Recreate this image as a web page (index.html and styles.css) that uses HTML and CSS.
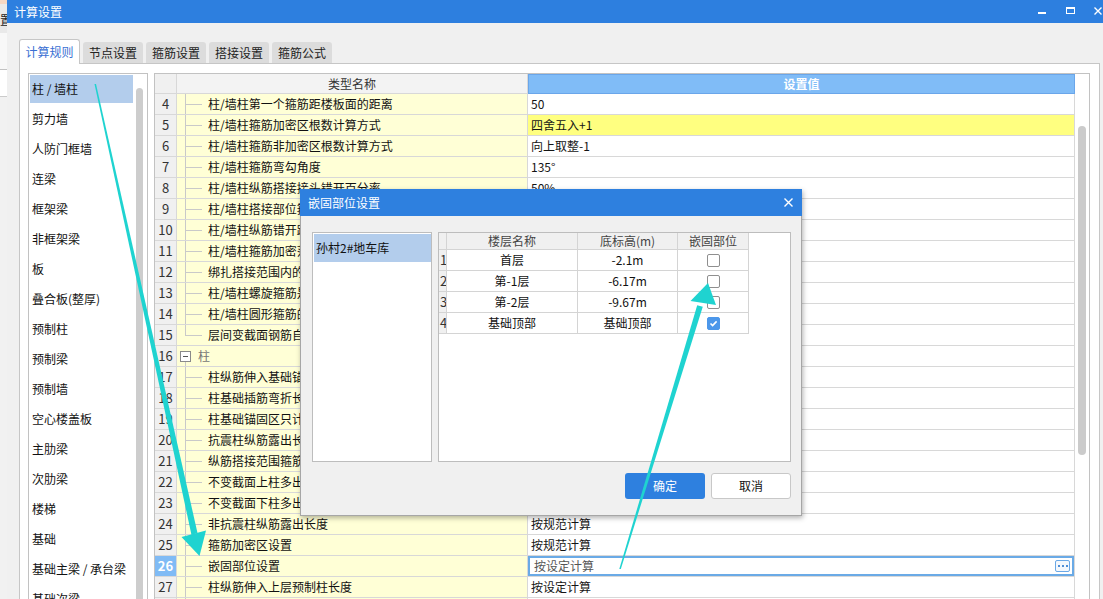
FILE: index.html
```html
<!DOCTYPE html>
<html lang="zh-CN">
<head>
<meta charset="utf-8">
<title>计算设置</title>
<link rel="stylesheet" href="styles.css">
</head>
<body>
<div class="desk">
  <div class="behind">
    <div class="b1"></div>
    <div class="b2"><span class="frag">设置</span></div>
    <div class="b3"></div>
    <div class="b4"></div>
    <div class="b5"></div>
  </div>
  <div class="win">
    <div class="titlebar">
      <span class="ttl">计算设置</span>
      <svg class="ctrls" width="69" height="23" viewBox="0 0 69 23">
        <rect x="4" y="12" width="8" height="2" fill="#fff"/>
        <rect x="32.5" y="7.5" width="8" height="6" fill="none" stroke="#fff"/>
        <rect x="32" y="7" width="9" height="2" fill="#fff"/>
        <path d="M60.5 7.5 L67.5 14.5 M67.5 7.5 L60.5 14.5" stroke="#fff" stroke-width="1.4"/>
      </svg>
    </div>
    <div class="winbody">
      <div class="tabs">
        <div class="tab active">计算规则</div>
        <div class="tab">节点设置</div>
        <div class="tab">箍筋设置</div>
        <div class="tab">搭接设置</div>
        <div class="tab">箍筋公式</div>
      </div>
      <div class="panel">
        <div class="cats">
          <div class="catlist">
            <div class="cat sel">柱 / 墙柱</div>
            <div class="cat">剪力墙</div>
            <div class="cat">人防门框墙</div>
            <div class="cat">连梁</div>
            <div class="cat">框架梁</div>
            <div class="cat">非框架梁</div>
            <div class="cat">板</div>
            <div class="cat">叠合板(整厚)</div>
            <div class="cat">预制柱</div>
            <div class="cat">预制梁</div>
            <div class="cat">预制墙</div>
            <div class="cat">空心楼盖板</div>
            <div class="cat">主肋梁</div>
            <div class="cat">次肋梁</div>
            <div class="cat">楼梯</div>
            <div class="cat">基础</div>
            <div class="cat">基础主梁 / 承台梁</div>
            <div class="cat">基础次梁</div>
          </div>
          <div class="catscroll"><div class="cthumb"></div></div>
        </div>
        <div class="table">
          <div class="tgrid">
            <div class="tr head"><div class="num"></div><div class="name">类型名称</div><div class="val">设置值</div></div>
            <div class="tr"><div class="num">4</div><div class="name"><span class="tree"></span><span class="nt">柱/墙柱第一个箍筋距楼板面的距离</span></div><div class="val">50</div></div>
            <div class="tr"><div class="num">5</div><div class="name"><span class="tree"></span><span class="nt">柱/墙柱箍筋加密区根数计算方式</span></div><div class="val hl">四舍五入+1</div></div>
            <div class="tr"><div class="num">6</div><div class="name"><span class="tree"></span><span class="nt">柱/墙柱箍筋非加密区根数计算方式</span></div><div class="val">向上取整-1</div></div>
            <div class="tr"><div class="num">7</div><div class="name"><span class="tree"></span><span class="nt">柱/墙柱箍筋弯勾角度</span></div><div class="val">135°</div></div>
            <div class="tr"><div class="num">8</div><div class="name"><span class="tree"></span><span class="nt">柱/墙柱纵筋搭接接头错开百分率</span></div><div class="val">50%</div></div>
            <div class="tr"><div class="num">9</div><div class="name"><span class="tree"></span><span class="nt">柱/墙柱搭接部位箍筋加密</span></div><div class="val">是</div></div>
            <div class="tr"><div class="num">10</div><div class="name"><span class="tree"></span><span class="nt">柱/墙柱纵筋错开距离设置</span></div><div class="val">按规范计算</div></div>
            <div class="tr"><div class="num">11</div><div class="name"><span class="tree"></span><span class="nt">柱/墙柱箍筋加密范围包含错开距离</span></div><div class="val">是</div></div>
            <div class="tr"><div class="num">12</div><div class="name"><span class="tree"></span><span class="nt">绑扎搭接范围内的箍筋间距min(5d,100)中，纵筋d的取值</span></div><div class="val">上下层最小直径</div></div>
            <div class="tr"><div class="num">13</div><div class="name"><span class="tree"></span><span class="nt">柱/墙柱螺旋箍筋是否连续通过</span></div><div class="val">是</div></div>
            <div class="tr"><div class="num">14</div><div class="name"><span class="tree"></span><span class="nt">柱/墙柱圆形箍筋的搭接长度</span></div><div class="val">max(lae,300)</div></div>
            <div class="tr"><div class="num">15</div><div class="name"><span class="tree last"></span><span class="nt">层间变截面钢筋自动判断</span></div><div class="val">是</div></div>
            <div class="tr"><div class="num">16</div><div class="name grp"><span class="box"><span class="minus"></span></span><span class="gt">柱</span></div><div class="val"></div></div>
            <div class="tr"><div class="num">17</div><div class="name"><span class="tree"></span><span class="nt">柱纵筋伸入基础锚固形式</span></div><div class="val">全部伸入基底弯折</div></div>
            <div class="tr"><div class="num">18</div><div class="name"><span class="tree"></span><span class="nt">柱基础插筋弯折长度</span></div><div class="val">按规范计算</div></div>
            <div class="tr"><div class="num">19</div><div class="name"><span class="tree"></span><span class="nt">柱基础锚固区只计算外侧箍筋</span></div><div class="val">是</div></div>
            <div class="tr"><div class="num">20</div><div class="name"><span class="tree"></span><span class="nt">抗震柱纵筋露出长度</span></div><div class="val">按规范计算</div></div>
            <div class="tr"><div class="num">21</div><div class="name"><span class="tree"></span><span class="nt">纵筋搭接范围箍筋间距</span></div><div class="val">min(5*d,100)</div></div>
            <div class="tr"><div class="num">22</div><div class="name"><span class="tree"></span><span class="nt">不变截面上柱多出的钢筋锚固</span></div><div class="val">1.2*lae</div></div>
            <div class="tr"><div class="num">23</div><div class="name"><span class="tree"></span><span class="nt">不变截面下柱多出的钢筋锚固</span></div><div class="val">1.2*lae</div></div>
            <div class="tr"><div class="num">24</div><div class="name"><span class="tree"></span><span class="nt">非抗震柱纵筋露出长度</span></div><div class="val">按规范计算</div></div>
            <div class="tr"><div class="num">25</div><div class="name"><span class="tree"></span><span class="nt">箍筋加密区设置</span></div><div class="val">按规范计算</div></div>
            <div class="tr cur"><div class="num">26</div><div class="name"><span class="tree"></span><span class="nt">嵌固部位设置</span></div><div class="val"><span class="edit">按设定计算</span><span class="dots"><i></i><i></i><i></i></span></div></div>
            <div class="tr"><div class="num">27</div><div class="name"><span class="tree"></span><span class="nt">柱纵筋伸入上层预制柱长度</span></div><div class="val">按设定计算</div></div>
            <div class="tr"><div class="num">28</div><div class="name"><span class="tree"></span><span class="nt">预制柱纵筋伸入基础长度</span></div><div class="val">按设定计算</div></div>
          </div>
          <div class="tscroll"><div class="tthumb"></div></div>
        </div>
      </div>
    </div>
  </div>
</div>

<div class="dlg">
  <div class="dlg-title">
    <span>嵌固部位设置</span>
    <svg class="dlg-x" width="9" height="9" viewBox="0 0 9 9"><path d="M0.5 0.5 L8.5 8.5 M8.5 0.5 L0.5 8.5" stroke="#fff" stroke-width="1.4"/></svg>
  </div>
  <div class="dlg-body">
    <div class="dlg-main">
      <div class="flist"><div class="fitem">孙村2#地车库</div></div>
      <div class="fgrid">
        <div class="gr gh"><div class="gn"></div><div class="g1">楼层名称</div><div class="g2">底标高(m)</div><div class="g3">嵌固部位</div></div>
        <div class="gr"><div class="gn">1</div><div class="g1">首层</div><div class="g2">-2.1m</div><div class="g3"><span class="cb"></span></div></div>
        <div class="gr"><div class="gn">2</div><div class="g1">第-1层</div><div class="g2">-6.17m</div><div class="g3"><span class="cb"></span></div></div>
        <div class="gr"><div class="gn">3</div><div class="g1">第-2层</div><div class="g2">-9.67m</div><div class="g3"><span class="cb"></span></div></div>
        <div class="gr"><div class="gn">4</div><div class="g1">基础顶部</div><div class="g2">基础顶部</div><div class="g3"><span class="cb on"><svg width="11" height="11" viewBox="0 0 11 11"><path d="M2.5 5.5 L4.6 7.6 L8.6 3.4" fill="none" stroke="#fff" stroke-width="1.6"/></svg></span></div></div>
      </div>
    </div>
    <div class="dlg-btns">
      <div class="btn ok">确定</div>
      <div class="btn cancel">取消</div>
    </div>
  </div>
</div>

<svg class="arrows" width="1103" height="599" viewBox="0 0 1103 599">
  <polygon points="94.5,84 96,84 197.5,533 191.5,535" fill="#1fd3d0"/>
  <polygon points="181.5,537 206,530.5 199.5,556" fill="#1fd3d0"/>
  <polygon points="619.3,569 620.8,569 702.8,306.8 697.2,305.2" fill="#1fd3d0"/>
  <polygon points="690.5,301 716,305 708,283" fill="#1fd3d0"/>
</svg>
</body>
</html>
```

FILE: styles.css
```css
* { box-sizing: border-box; }
html, body { margin: 0; padding: 0; }
body {
  width: 1103px;
  height: 599px;
  overflow: hidden;
  position: relative;
  font-family: "Noto Sans CJK SC", "Microsoft YaHei", sans-serif;
  font-size: 12px;
  color: #141414;
  background: #f0f0f0;
}

.desk { display: flex; height: 599px; }

/* fragment of the window behind */
.behind {
  width: 7px;
  flex: none;
  display: flex;
  flex-direction: column;
  overflow: hidden;
  background: #f3f3f3;
}
.b1 { height: 4px; background: #f4d7c4; flex: none; }
.b2 { height: 29px; background: #e9e9e9; flex: none; overflow: hidden; padding-top: 9px; }
.frag { display: block; margin-left: -12px; font-size: 12px; line-height: 14px; color: #222; white-space: nowrap; }
.b3 { height: 37px; background: #f8f8f8; border-bottom: 1px solid #c2c2c2; flex: none; }
.b4 { height: 27px; background: #fff; border-bottom: 1px solid #cbcbcb; flex: none; }
.b5 { flex: 1; background: #f1f1f1; }

/* main window */
.win { flex: 1; display: flex; flex-direction: column; min-width: 0; }
.titlebar {
  height: 23px;
  flex: none;
  background: #2d7fdf;
  color: #fff;
  display: flex;
  align-items: center;
  padding-left: 7px;
}
.ttl { font-size: 12px; line-height: 16px; }
.ctrls { margin-left: auto; display: block; }

.winbody { flex: 1; padding: 16px 0 0 12px; background: #f0f0f0; overflow: hidden; }

.tabs { display: flex; align-items: flex-end; height: 24px; }
.tab {
  width: 60px;
  height: 21px;
  margin-left: 3px;
  background: #dcdcdc;
  border-radius: 3px 3px 0 0;
  display: flex;
  align-items: center;
  justify-content: center;
  line-height: 16px;
  color: #222;
}
.tab.active {
  width: 61px;
  height: 25px;
  margin-left: 0;
  margin-bottom: -1px;
  background: #fff;
  border: 1px solid #c6c6c6;
  border-bottom: none;
  color: #3a6fd3;
  position: relative;
  z-index: 1;
}

.panel {
  width: 1081px;
  height: 560px;
  background: #fff;
  border: 1px solid #c6c6c6;
  padding: 9px 9px 0 8px;
  display: flex;
  gap: 6px;
  align-items: flex-start;
}

/* category list */
.cats {
  width: 120px;
  height: 540px;
  flex: none;
  border: 1px solid #c2c2c2;
  display: flex;
  overflow: hidden;
}
.catlist { width: 104px; flex: none; padding: 1px 0 0 1px; }
.cat {
  height: 28px;
  margin-bottom: 2px;
  padding-left: 2px;
  line-height: 28px;
  white-space: nowrap;
  color: #111;
}
.cat.sel { background: #b3cdec; }
.catscroll { width: 14px; flex: none; padding: 14px 0 0 3px; }
.cthumb { width: 7px; height: 520px; background: #cdcdcd; border-radius: 4px 4px 0 0; }

/* rules table */
.table {
  width: 936px;
  height: 540px;
  flex: none;
  border: 1px solid #c2c2c2;
  display: flex;
  overflow: hidden;
}
.tgrid { width: 920px; flex: none; }
.tr { display: flex; height: 21px; }
.tr > div { border-right: 1px solid #d8d8d8; border-bottom: 1px solid #d8d8d8; flex: none; }
.num {
  width: 22px;
  background: #f0f0f0;
  text-align: center;
  font-size: 13px;
  line-height: 20px;
  color: #333;
}
.name {
  width: 351px;
  background: #ffffd6;
  display: flex;
  align-items: center;
  white-space: nowrap;
  overflow: hidden;
}
.val {
  width: 547px;
  padding-left: 3px;
  line-height: 20px;
  white-space: nowrap;
  overflow: hidden;
  background: #fff;
}
.val.hl { background: #ffff80; }

.tr.head { height: 20px; }
.head .num { line-height: 19px; }
.head .name { background: #f3f3f3; justify-content: center; color: #333; }
.head .val {
  background: #80bcf7;
  border: 1px solid #6aa6ea;
  color: #fff;
  font-weight: bold;
  text-align: center;
  line-height: 18px;
  padding-left: 0;
}

.tree {
  width: 25px;
  height: 20px;
  flex: none;
  background:
    linear-gradient(#c9c9c9, #c9c9c9) 8px 0 / 1px 20px no-repeat,
    linear-gradient(#c9c9c9, #c9c9c9) 8px 10px / 17px 1px no-repeat;
}
.tree.last {
  background:
    linear-gradient(#c9c9c9, #c9c9c9) 8px 0 / 1px 11px no-repeat,
    linear-gradient(#c9c9c9, #c9c9c9) 8px 10px / 17px 1px no-repeat;
}
.nt { padding-left: 6px; line-height: 20px; color: #111; }

.name.grp {
  background:
    linear-gradient(#c9c9c9, #c9c9c9) 8px 15px / 1px 6px no-repeat,
    #ffffd6;
}
.box {
  width: 11px;
  height: 11px;
  margin-left: 3px;
  border: 1px solid #8a8a8a;
  background: #fff;
  display: flex;
  align-items: center;
  justify-content: center;
  flex: none;
}
.minus { width: 5px; height: 1px; background: #555; }
.gt { margin-left: 7px; color: #777; line-height: 20px; }

.tr.cur .num { background: #80bbf5; color: #fff; font-weight: bold; }
.tr.cur .val {
  box-shadow: inset 0 0 0 2px #6aaae6;
  display: flex;
  align-items: center;
  padding-left: 6px;
}
.edit { color: #555; }
.dots {
  margin-left: auto;
  margin-right: 4px;
  width: 15px;
  height: 12px;
  border: 1px solid #6aa8e6;
  border-radius: 2px;
  background: #f4f8fd;
  display: flex;
  align-items: center;
  justify-content: center;
  gap: 2px;
}
.dots i { display: block; width: 2px; height: 2px; background: #4f8fd6; }

.tscroll { width: 14px; flex: none; padding: 52px 0 0 3px; background: #fff; }
.tthumb { width: 8px; height: 329px; background: #cbcbcb; border-radius: 4px; }

/* dialog */
.dlg {
  position: absolute;
  left: 300px;
  top: 189px;
  width: 502px;
  height: 327px;
  background: #f0f0f0;
  border: 1px solid #a6a6a6;
  border-top: none;
  box-shadow: 1px 2px 5px rgba(0, 0, 0, 0.3);
  display: flex;
  flex-direction: column;
  z-index: 2;
}
.dlg-title {
  height: 27px;
  flex: none;
  margin: 0 -1px;
  background: #2e80df;
  color: #fff;
  display: flex;
  align-items: center;
  padding: 0 9px 0 8px;
  line-height: 16px;
}
.dlg-x { margin-left: auto; display: block; }
.dlg-body { flex: 1; padding: 16px 10px 0 11px; display: flex; flex-direction: column; }
.dlg-main { display: flex; gap: 6px; height: 230px; flex: none; }
.flist {
  width: 120px;
  flex: none;
  border: 1px solid #bdbdbd;
  background: #fff;
  padding: 1px 0 0 1px;
}
.fitem { height: 28px; line-height: 28px; padding-left: 2px; background: #b3cdec; white-space: nowrap; color: #111; }
.fgrid { width: 353px; flex: none; border: 1px solid #bdbdbd; background: #fff; }
.gr { display: flex; height: 21px; }
.gr > div {
  border-right: 1px solid #d4d4d4;
  border-bottom: 1px solid #d4d4d4;
  text-align: center;
  line-height: 20px;
  flex: none;
  color: #111;
}
.gr.gh { height: 17px; }
.gr.gh > div { background: #f0f0f0; line-height: 16px; color: #444; }
.gn { width: 8px; background: #f0f0f0; overflow: hidden; text-align: left !important; padding-left: 1px; font-size: 13px; color: #333 !important; }
.g1 { width: 131px; }
.g2 { width: 100px; }
.g3 { width: 71px; display: flex; align-items: center; justify-content: center; }
.cb {
  width: 13px;
  height: 13px;
  border: 1px solid #8f8f8f;
  border-radius: 2px;
  background: #fff;
  display: flex;
  align-items: center;
  justify-content: center;
}
.cb.on { background: #4c97ea; border-color: #4c97ea; }
.cb svg { display: block; }

.dlg-btns { display: flex; justify-content: flex-end; gap: 6px; margin-top: 11px; }
.btn {
  width: 80px;
  height: 26px;
  border-radius: 3px;
  display: flex;
  align-items: center;
  justify-content: center;
  line-height: 16px;
}
.btn.ok { background: #2e80df; color: #fff; }
.btn.cancel { background: #fff; border: 1px solid #c8c8c8; color: #111; }

/* annotation arrows */
.arrows { position: absolute; left: 0; top: 0; z-index: 3; pointer-events: none; }
```
